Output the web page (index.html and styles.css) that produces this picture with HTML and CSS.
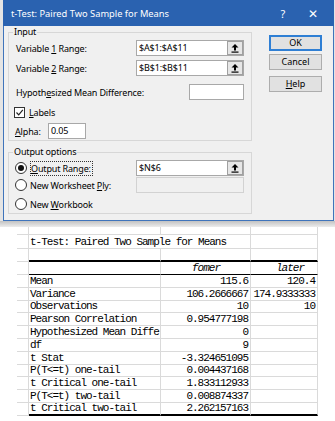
FILE: index.html
```html
<!DOCTYPE html>
<html lang="en">
  <head>
    <meta charset="UTF-8" />
    <title>t-Test: Paired Two Sample for Means</title>
    <link rel="stylesheet" href="styles.css">
  </head>
  <body>
    <div class="top">
      <div class="dialog">
        <div class="titlebar">
          <span class="title">t-Test: Paired Two Sample for Means</span>
          <span class="tb-btn">?</span>
          <span class="tb-btn tb-close">✕</span>
        </div>
        <div class="content">
          <div class="groups">
            <fieldset class="group group-input">
              <legend>Input</legend>
              <div class="row row-first">
                <span class="lbl">Variable <u>1</u> Range:</span>
                <div class="refedit">
                  <span class="val">$A$1:$A$11</span>
                  <span class="refbtn"><svg width="8" height="9" viewBox="0 0 8 9"><path d="M4 0 L7.5 3.5 H5 V6.5 H3 V3.5 H0.5 Z" fill="#000"/><rect x="0.5" y="7.5" width="7" height="1.2" fill="#000"/></svg></span>
                </div>
              </div>
              <div class="row row-gap">
                <span class="lbl">Variable <u>2</u> Range:</span>
                <div class="refedit">
                  <span class="val">$B$1:$B$11</span>
                  <span class="refbtn"><svg width="8" height="9" viewBox="0 0 8 9"><path d="M4 0 L7.5 3.5 H5 V6.5 H3 V3.5 H0.5 Z" fill="#000"/><rect x="0.5" y="7.5" width="7" height="1.2" fill="#000"/></svg></span>
                </div>
              </div>
              <div class="row row-hyp">
                <span>Hypoth<u>e</u>sized Mean Difference:</span>
                <div class="textbox hyp-box"></div>
              </div>
              <div class="row row-gap">
                <span class="check"><svg width="9" height="9" viewBox="0 0 9 9"><path d="M1.5 4.5 L3.7 6.8 L7.8 1.8" fill="none" stroke="#222" stroke-width="1.2"/></svg></span>
                <span><u>L</u>abels</span>
              </div>
              <div class="row row-alpha">
                <span class="lbl-alpha"><u>A</u>lpha:</span>
                <div class="textbox alpha-box">0.05</div>
              </div>
            </fieldset>

            <fieldset class="group group-output">
              <legend>Output options</legend>
              <div class="row row-first">
                <span class="radio radio-on"></span>
                <span class="radio-lbl"><span class="focus"><u>O</u>utput Range:</span></span>
                <div class="refedit">
                  <span class="val">$N$6</span>
                  <span class="refbtn"><svg width="8" height="9" viewBox="0 0 8 9"><path d="M4 0 L7.5 3.5 H5 V6.5 H3 V3.5 H0.5 Z" fill="#000"/><rect x="0.5" y="7.5" width="7" height="1.2" fill="#000"/></svg></span>
                </div>
              </div>
              <div class="row row-ply">
                <span class="radio"></span>
                <span class="radio-lbl">New Worksheet <u>P</u>ly:</span>
                <div class="textbox disabled-box"></div>
              </div>
              <div class="row row-book">
                <span class="radio"></span>
                <span class="radio-lbl">New <u>W</u>orkbook</span>
              </div>
            </fieldset>
          </div>

          <div class="buttons">
            <div class="button button-default">OK</div>
            <div class="button button-cancel">Cancel</div>
            <div class="button button-help"><u>H</u>elp</div>
          </div>
        </div>
      </div>
      <div class="shadow"></div>
    </div>

    <div class="sheet">
      <div class="c"></div><div class="c"></div><div class="c"></div><div class="c"></div>

      <div class="c"></div><div class="c span2">t-Test: Paired Two Sample for Means</div><div class="c"></div>

      <div class="c"></div><div class="c thick"></div><div class="c thick"></div><div class="c thick"></div>

      <div class="c"></div><div class="c head"></div><div class="c head center"><i>fomer</i></div><div class="c head later"><i>later</i></div>

      <div class="c"></div><div class="c">Mean</div><div class="c num">115.6</div><div class="c num">120.4</div>
      <div class="c"></div><div class="c">Variance</div><div class="c num">106.2666667</div><div class="c num">174.9333333</div>
      <div class="c"></div><div class="c">Observations</div><div class="c num">10</div><div class="c num">10</div>
      <div class="c"></div><div class="c">Pearson Correlation</div><div class="c num">0.954777198</div><div class="c"></div>
      <div class="c"></div><div class="c">Hypothesized Mean Diffe</div><div class="c num">0</div><div class="c"></div>
      <div class="c"></div><div class="c">df</div><div class="c num">9</div><div class="c"></div>
      <div class="c"></div><div class="c">t Stat</div><div class="c num">-3.324651095</div><div class="c"></div>
      <div class="c"></div><div class="c">P(T&lt;=t) one-tail</div><div class="c num">0.004437168</div><div class="c"></div>
      <div class="c"></div><div class="c">t Critical one-tail</div><div class="c num">1.833112933</div><div class="c"></div>
      <div class="c"></div><div class="c">P(T&lt;=t) two-tail</div><div class="c num">0.008874337</div><div class="c"></div>
      <div class="c"></div><div class="c last">t Critical two-tail</div><div class="c num last">2.262157163</div><div class="c last"></div>
    </div>
  </body>
</html>
```

FILE: styles.css
```css
body {
  margin: 0;
  background: #fff;
  font-family: "Noto Sans", sans-serif;
  font-size: 9px;
  color: #000;
}
.top {
  background: #e4e4e4;
}
.dialog {
  margin-left: 3px;
  width: 331px;
  box-sizing: border-box;
  border: 1px solid #3f74bb;
  border-top: none;
  background: #f0f0f0;
}
.titlebar {
  display: flex;
  align-items: center;
  height: 26px;
  margin: 0 -1px;
  padding: 0 6px 0 8px;
  background: #2a62b0;
  color: #fff;
  font-size: 9.3px;
}
.title {
  flex: 1;
}
.tb-btn {
  width: 30px;
  text-align: center;
  font-size: 11px;
}
.tb-close {
  font-size: 12px;
}
.content {
  display: flex;
  padding: 0 0 6px 4px;
}
.groups {
  width: 244px;
  letter-spacing: -0.15px;
}
.group {
  margin: 0;
  padding: 2px 7px 1px 7px;
  border: 1px solid #d7d7d7;
  min-width: 0;
}
.group legend {
  padding: 0 1px;
  margin-left: -3px;
  line-height: 12px;
}
.group-output {
  margin-top: 5px;
}
.row {
  display: flex;
  align-items: center;
  height: 16px;
}
.row-gap {
  margin-top: 4px;
}
.row-hyp {
  margin-top: 8px;
  justify-content: space-between;
}
.row-alpha {
  margin-top: 3px;
}
.row-ply {
  margin-top: 1px;
}
.row-book {
  margin-top: 3px;
}
.lbl {
  width: 120px;
}
.refedit {
  display: flex;
  width: 108px;
  height: 16px;
  box-sizing: border-box;
  border: 1px solid #a8a8a8;
  background: #fff;
  margin-left: auto;
}
.refedit .val {
  flex: 1;
  padding-left: 2px;
  line-height: 14px;
}
.refbtn {
  display: flex;
  align-items: center;
  justify-content: center;
  width: 16px;
  box-sizing: border-box;
  border: 1px solid #a0a0a0;
  background: #e6e6e6;
}
.textbox {
  height: 16px;
  box-sizing: border-box;
  border: 1px solid #a8a8a8;
  background: #fff;
  line-height: 14px;
  padding-left: 2px;
}
.hyp-box {
  width: 55px;
}
.alpha-box {
  width: 38px;
}
.disabled-box {
  width: 108px;
  margin-left: auto;
  border-color: #d2d2d2;
  background: #f0f0f0;
}
.lbl-alpha {
  width: 33px;
  margin-left: -1px;
}
.check {
  display: flex;
  align-items: center;
  justify-content: center;
  width: 11px;
  height: 11px;
  box-sizing: border-box;
  border: 1px solid #333;
  background: #fff;
  margin: 0 4px 0 -2px;
}
.radio {
  width: 12px;
  height: 12px;
  box-sizing: border-box;
  border: 1px solid #333;
  border-radius: 50%;
  background: #fff;
  margin: 0 3px 0 -1px;
  position: relative;
}
.radio-on::after {
  content: "";
  position: absolute;
  left: 2px;
  top: 2px;
  width: 6px;
  height: 6px;
  border-radius: 50%;
  background: #111;
}
.radio-lbl {
  width: 105px;
}
.focus {
  border: 1px dotted #333;
  padding: 0 1px 0 0;
}
.buttons {
  width: 53px;
  margin-left: 17px;
  padding-top: 9px;
}
.button {
  height: 16px;
  box-sizing: border-box;
  border: 1px solid #adadad;
  background: #e1e1e1;
  text-align: center;
  line-height: 14px;
}
.button-default {
  border: 2px solid #2f7fd4;
  line-height: 12px;
}
.button-cancel {
  margin-top: 3px;
}
.button-help {
  margin-top: 6px;
}
.shadow {
  height: 6px;
  background: linear-gradient(#c2c2c2, #ececec);
}

.sheet {
  display: grid;
  grid-template-columns: 12px 132px 90px 67px;
  grid-template-rows: 8px 14px 13px 13px repeat(11, 12.8px);
  margin-left: 17px;
  font-family: "Liberation Mono", monospace;
  font-size: 11px;
  letter-spacing: -1px;
}
.c {
  display: flex;
  align-items: flex-end;
  box-sizing: border-box;
  border-right: 1px solid #dadada;
  border-bottom: 1px solid #dadada;
  padding-left: 1px;
  line-height: 12px;
  white-space: nowrap;
  overflow: hidden;
}
.span2 {
  grid-column: span 2;
}
.thick {
  border-bottom: 2px solid #000;
}
.head {
  border-bottom: 1px solid #000;
}
.center {
  justify-content: center;
}
.later {
  justify-content: flex-end;
  padding-right: 13px;
}
.num {
  justify-content: flex-end;
  padding-right: 2px;
}
.last {
  border-bottom: 2px solid #000;
}
```
